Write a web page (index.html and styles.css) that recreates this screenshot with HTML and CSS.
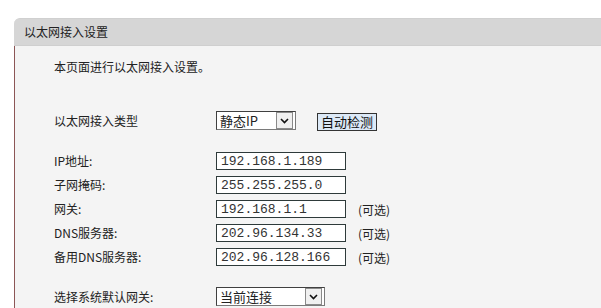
FILE: index.html
```html
<!DOCTYPE html>
<html lang="zh-CN">
<head>
  <meta charset="UTF-8">
  <title>以太网接入设置</title>
  <link rel="stylesheet" href="styles.css">
</head>
<body>
  <div class="panel">
    <div class="panel-title">以太网接入设置</div>
    <div class="panel-body">
      <p class="intro">本页面进行以太网接入设置。</p>

      <div class="row row-type">
        <label>以太网接入类型</label>
        <div class="field">
          <div class="select select-type">
            <span class="select-text">静态IP</span>
            <span class="select-arrow"><svg width="9" height="6" viewBox="0 0 9 6"><path d="M1 1 L4.5 4.5 L8 1" fill="none" stroke="#111" stroke-width="1.6"/></svg></span>
          </div>
          <button class="detect-btn">自动检测</button>
        </div>
      </div>

      <div class="ip-rows">
        <div class="row">
          <label>IP地址:</label>
          <input class="ip-input" type="text" value="192.168.1.189">
        </div>
        <div class="row">
          <label>子网掩码:</label>
          <input class="ip-input" type="text" value="255.255.255.0">
        </div>
        <div class="row">
          <label>网关:</label>
          <input class="ip-input" type="text" value="192.168.1.1">
          <span class="note">(可选)</span>
        </div>
        <div class="row">
          <label>DNS服务器:</label>
          <input class="ip-input" type="text" value="202.96.134.33">
          <span class="note">(可选)</span>
        </div>
        <div class="row">
          <label>备用DNS服务器:</label>
          <input class="ip-input" type="text" value="202.96.128.166">
          <span class="note">(可选)</span>
        </div>
      </div>

      <div class="row row-gateway">
        <label>选择系统默认网关:</label>
        <div class="select select-gw">
          <span class="select-text">当前连接</span>
          <span class="select-arrow"><svg width="9" height="6" viewBox="0 0 9 6"><path d="M1 1 L4.5 4.5 L8 1" fill="none" stroke="#111" stroke-width="1.6"/></svg></span>
        </div>
      </div>
    </div>
  </div>
</body>
</html>
```

FILE: styles.css
```css
body {
  margin: 0;
  background: #fff;
  font-family: "Noto Sans CJK SC", "Liberation Sans", sans-serif;
  font-size: 12px;
  color: #222;
  overflow: hidden;
}
.panel {
  margin: 18px 0 0 14px;
}
.panel-title {
  height: 28px;
  line-height: 26px;
  padding-left: 10px;
  background: #d6d6d6;
  border-top: 1px solid #d0d0d0;
  border-bottom: 1px solid #cfcfcf;
  border-top-left-radius: 6px;
  box-sizing: border-box;
  color: #222;
}
.panel-body {
  background: #f4f4f4;
  border-left: 1px solid #8c5656;
  padding: 11px 0 20px 39px;
  min-height: 300px;
}
.intro {
  margin: 0;
  line-height: 20px;
}
.row {
  display: grid;
  grid-template-columns: 162px 130px auto;
  align-items: center;
  height: 18px;
}
.row label {
  line-height: 18px;
}
.row-type {
  margin-top: 33px;
  height: 20px;
}
.field {
  display: flex;
  align-items: center;
  grid-column: 2 / 4;
}
.select {
  display: flex;
  align-items: center;
  height: 19px;
  box-sizing: border-box;
  border: 1px solid #7a7a7a;
  border-top-color: #404040;
  border-left-color: #404040;
  background: #fff;
  font-size: 13px;
}
.select-type {
  width: 80px;
}
.select-gw {
  width: 109px;
}
.select-text {
  flex: 1;
  padding-left: 3px;
  line-height: 17px;
  white-space: nowrap;
  font-family: "Noto Sans CJK SC", sans-serif;
}
.select-arrow {
  display: flex;
  align-items: center;
  justify-content: center;
  width: 15px;
  height: 15px;
  margin-right: 2px;
  border: 1px solid #8a8a8a;
  background: #f0f0f0;
}
.detect-btn {
  margin: 3px 0 0 21px;
  height: 18px;
  padding: 0 3px;
  border: 1px solid #333;
  background: #dce9f7;
  font-family: "Noto Sans CJK SC", sans-serif;
  font-size: 13px;
  line-height: 16px;
  color: #111;
}
.ip-rows {
  margin-top: 22px;
  display: flex;
  flex-direction: column;
  gap: 6px;
}
.ip-input {
  width: 130px;
  height: 18px;
  box-sizing: border-box;
  margin: 0;
  padding: 0 0 0 4px;
  border: 1px solid #2e3a3a;
  background: #fff;
  font-family: "Liberation Mono", monospace;
  font-size: 13px;
  color: #333;
  outline: none;
}
.note {
  padding-left: 12px;
  white-space: nowrap;
}
.row-gateway {
  margin-top: 21px;
  height: 19px;
}
```
